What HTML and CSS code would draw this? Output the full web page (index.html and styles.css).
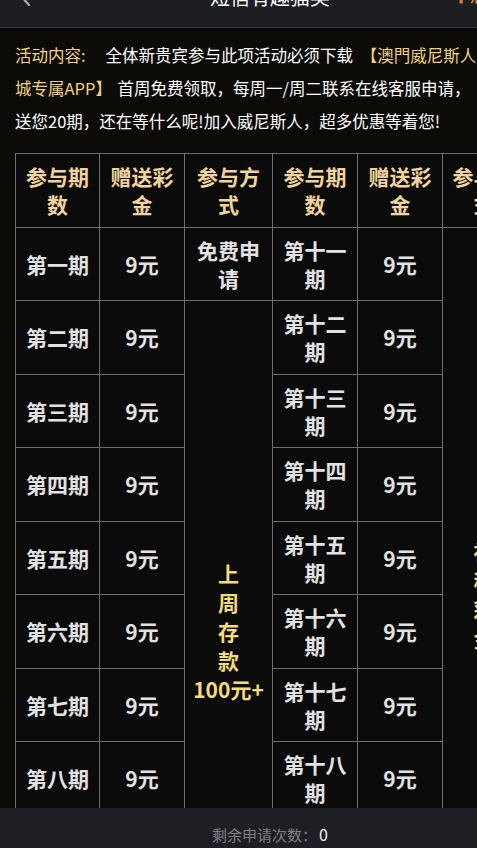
FILE: index.html
```html
<!DOCTYPE html>
<html lang="zh-CN">
<head>
<meta charset="utf-8">
<meta name="viewport" content="width=device-width, initial-scale=1">
<title>短信有趣猫奖</title>
<link rel="stylesheet" href="styles.css">
</head>
<body>
<div class="page">
  <header class="topbar">
    <span class="back">
      <svg width="12" height="20" viewBox="0 0 12 20"><path d="M10 1 L2 10 L10 19" fill="none" stroke="#a9abb3" stroke-width="2.2" stroke-linecap="round" stroke-linejoin="round"/></svg>
    </span>
    <h1 class="title">短信有趣猫奖</h1>
    <span class="rule"><span class="rule-icon">✚</span>活动规则</span>
  </header>

  <main class="content">
    <p class="intro"><span class="gold label">活动内容:</span>全体新贵宾参与此项活动必须下载 <span class="gold bracket">【澳門威尼斯人城专属APP】</span> 首周免费领取，每周一/周二联系在线客服申请，送您20期，还在等什么呢!加入威尼斯人，超多优惠等着您!</p>

    <table class="grid">
      <colgroup>
        <col class="w1"><col class="w2"><col class="w3"><col class="w4"><col class="w5"><col class="w6">
      </colgroup>
      <thead>
        <tr><th>参与期数</th><th>赠送彩金</th><th>参与方式</th><th>参与期数</th><th>赠送彩金</th><th>参与方式</th></tr>
      </thead>
      <tbody>
        <tr><td>第一期</td><td>9元</td><td>免费申请</td><td>第十一期</td><td>9元</td><td rowspan="10" class="way">神<br>秘<br>彩<br>金</td></tr>
        <tr><td>第二期</td><td>9元</td><td rowspan="9" class="way">上<br>周<br>存<br>款<br>100元+</td><td>第十二期</td><td>9元</td></tr>
        <tr><td>第三期</td><td>9元</td><td>第十三期</td><td>9元</td></tr>
        <tr><td>第四期</td><td>9元</td><td>第十四期</td><td>9元</td></tr>
        <tr><td>第五期</td><td>9元</td><td>第十五期</td><td>9元</td></tr>
        <tr><td>第六期</td><td>9元</td><td>第十六期</td><td>9元</td></tr>
        <tr><td>第七期</td><td>9元</td><td>第十七期</td><td>9元</td></tr>
        <tr><td>第八期</td><td>9元</td><td>第十八期</td><td>9元</td></tr>
        <tr><td>第九期</td><td>9元</td><td>第十九期</td><td>9元</td></tr>
        <tr><td>第十期</td><td>9元</td><td>第二十期</td><td>9元</td></tr>
      </tbody>
    </table>
  </main>

  <footer class="bottombar">
    <span class="remain-label">剩余申请次数：</span><span class="remain-num">0</span>
  </footer>
</div>
</body>
</html>
```

FILE: styles.css
```css
html, body {
  margin: 0;
  padding: 0;
  background: #0d0b08;
  overflow: hidden;
}

body {
  font-family: "Noto Sans CJK SC", "Noto Sans", "Liberation Sans", sans-serif;
  color: #ffffff;
}

.page {
  width: 540px;
}

.topbar {
  height: 46px;
  margin-top: -19px;
  background: #1d1e23;
  border-bottom: 1px solid #3a3b41;
  display: grid;
  grid-template-columns: 1fr auto 1fr;
  align-items: start;
}

.back {
  padding-left: 19px;
  padding-top: 5px;
  display: flex;
}

.title {
  margin: 0;
  padding-top: 6px;
  font-size: 20px;
  line-height: 20px;
  font-weight: 400;
  color: #ffffff;
}

.rule {
  justify-self: end;
  padding-right: 14px;
  padding-top: 8px;
  font-size: 14px;
  line-height: 14px;
  color: #e9b84f;
}

.rule-icon {
  color: #e07a2c;
  margin-right: 2px;
}

.content {
  padding: 11px 15px 0 15px;
}

.intro {
  margin: 0;
  width: 470px;
  font-size: 16.5px;
  line-height: 33px;
  color: #ffffff;
}

.gold {
  color: #f2d37a;
}

.label {
  margin-right: 20px;
}

.bracket {
  margin-left: 4px;
  margin-right: 2px;
}

.grid {
  margin-top: 15px;
  width: 510px;
  border-collapse: collapse;
  table-layout: fixed;
  background: #0b0b0b;
}

.w1 { width: 84px; }
.w2 { width: 85px; }
.w3 { width: 88px; }
.w4 { width: 85px; }
.w5 { width: 85px; }
.w6 { width: 83px; }

.grid tr {
  height: 73.5px;
}

.grid th,
.grid td {
  border: 1px solid #6e6e6e;
  padding: 0 2px;
  text-align: center;
  vertical-align: middle;
  font-size: 21px;
  line-height: 28px;
  font-weight: 700;
}

.grid th {
  color: #f1d49d;
}

.grid td {
  color: #e2e2e2;
}

.grid td.way {
  color: #f5dc78;
  line-height: 29px;
}

.bottombar {
  position: fixed;
  left: 0;
  bottom: 0;
  width: 540px;
  height: 40px;
  box-sizing: border-box;
  padding-top: 16px;
  background: #1e1f24;
  text-align: center;
  font-size: 15px;
  line-height: 20px;
}

.remain-label {
  color: #7f8086;
}

.remain-num {
  color: #f2f2f2;
  font-size: 16px;
  margin-left: 2px;
}
```
